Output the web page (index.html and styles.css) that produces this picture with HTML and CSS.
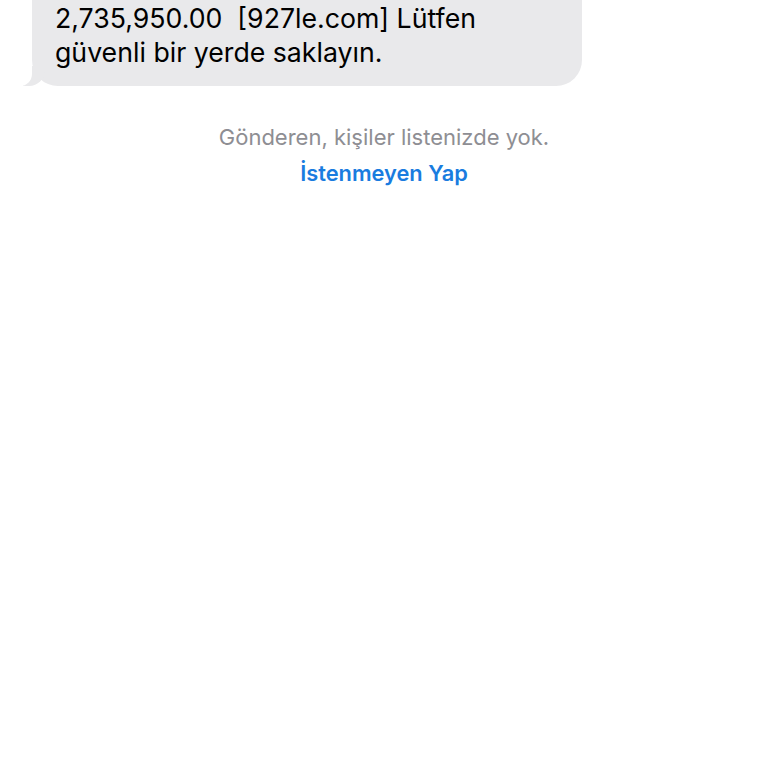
FILE: index.html
```html
<!DOCTYPE html>
<html>
<head>
    <title>Mesajlar</title>
    <link rel="stylesheet" href="styles.css">
</head>
<body>
    <div class="thread">
        <div class="bubble">
            <p class="line">hesabınıza yatırıldı, mevcut bakiye:</p>
            <p class="line">2,735,950.00&nbsp; [927le.com] Lütfen</p>
            <p class="line">güvenli bir yerde saklayın.</p>
        </div>
        <div class="notice">
            <p class="notice-text">Gönderen, kişiler listenizde yok.</p>
            <a class="notice-link" href="#">İstenmeyen Yap</a>
        </div>
    </div>
</body>
</html>
```

FILE: styles.css
```css
body { margin: 0; background-color: #ffffff;
font-family: Inter, "Liberation Sans", sans-serif; }
.thread { display: flex; flex-direction: column; }
.bubble {
    position: relative;
    width: 527px; margin-left: 32px; margin-top: -33px;
    padding: 0 0 17px 23px;
    background-color: #e9e9eb; border-radius: 0 0 26px 26px;
    color: #000000; font-size: 26.7px; line-height: 34px;
}
.bubble::before {
    content: ""; position: absolute; bottom: 0; left: -9px;
    width: 22px; height: 20px; background-color: #e9e9eb;
    border-bottom-right-radius: 16px;
}
.bubble::after {
    content: ""; position: absolute; bottom: 0; left: -14px;
    width: 14px; height: 22px; background-color: #ffffff;
    border-bottom-right-radius: 12px;
}
.line { margin: 0; }
.notice {
    display: flex; flex-direction: column; align-items: center;
    margin-top: 39px; gap: 11px;
}
.notice-text { margin: 0; color: #8e8e93; font-size: 22px; line-height: 25px; }
.notice-link {
    color: #1a7cdf; font-size: 21.8px; line-height: 25px;
    font-weight: 600; text-decoration: none;
}
```
